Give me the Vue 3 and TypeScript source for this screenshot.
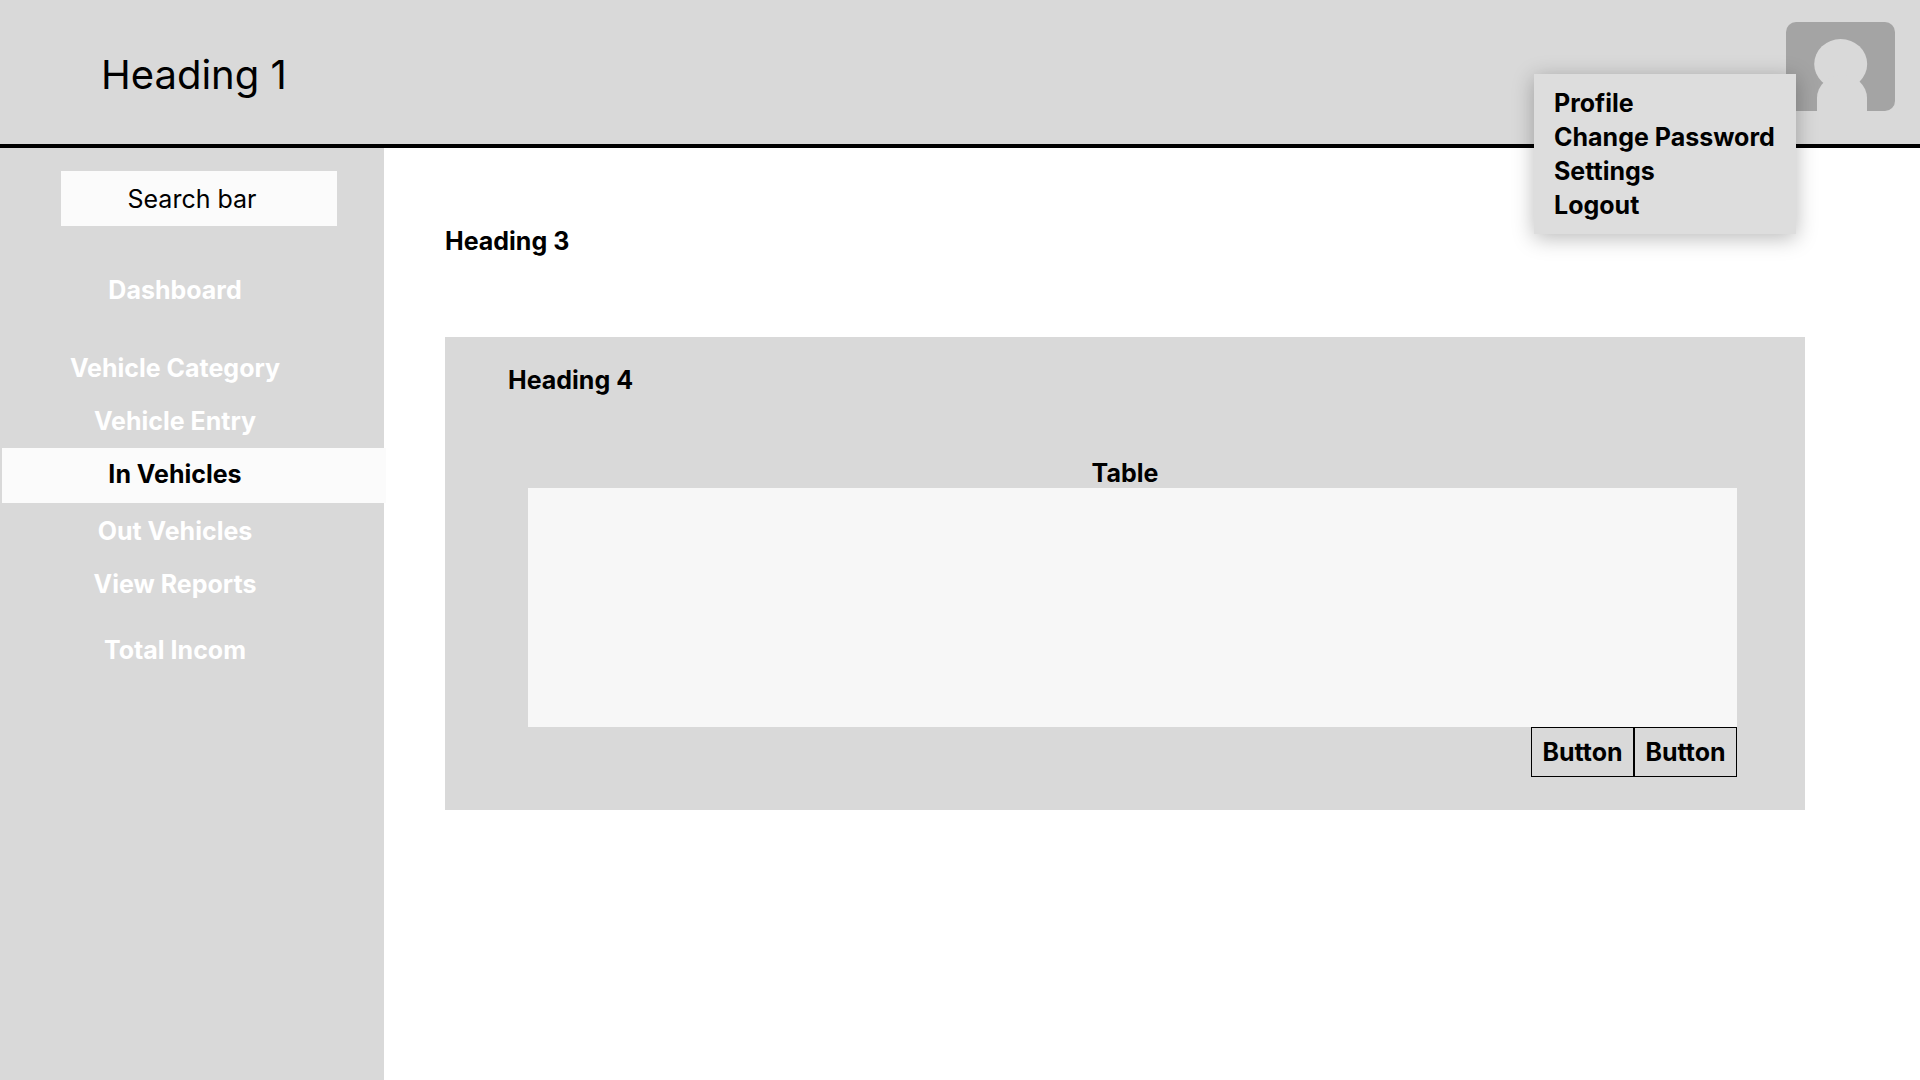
<script setup lang="ts">
import { ref } from 'vue'

interface NavItem {
  label: string
  active?: boolean
}

const search = ref('')

const navGroups: NavItem[][] = [
  [{ label: 'Dashboard' }],
  [
    { label: 'Vehicle Category' },
    { label: 'Vehicle Entry' },
    { label: 'In Vehicles', active: true },
    { label: 'Out Vehicles' },
    { label: 'View Reports' },
  ],
  [{ label: 'Total Incom' }],
]

const accountLinks: string[] = ['Profile', 'Change Password', 'Settings', 'Logout']
</script>

<template>
  <div class="page">
    <header class="topbar">
      <h1>Heading 1</h1>
      <div class="account">
        <svg class="avatar" viewBox="0 0 109 89" role="img" aria-label="User avatar">
          <rect width="109" height="89" rx="10" fill="#a4a4a4" />
          <ellipse cx="54.7" cy="42" rx="26.5" ry="25" fill="#d9d9d9" />
          <path d="M31 89V76A25 23 0 0 1 81 76V89Z" fill="#d9d9d9" />
        </svg>
        <nav class="menu" aria-label="Account">
          <a v-for="link in accountLinks" :key="link" href="#">{{ link }}</a>
        </nav>
      </div>
    </header>

    <div class="body">
      <aside class="sidebar">
        <input v-model="search" class="search" type="text" placeholder="Search bar" aria-label="Search bar" />
        <nav class="nav" aria-label="Main">
          <ul v-for="(group, i) in navGroups" :key="i">
            <li v-for="item in group" :key="item.label">
              <a href="#" :class="{ active: item.active }">{{ item.label }}</a>
            </li>
          </ul>
        </nav>
      </aside>

      <main class="content">
        <h3>Heading 3</h3>
        <section class="panel">
          <h4>Heading 4</h4>
          <h5>Table</h5>
          <div class="table-area"></div>
          <div class="actions">
            <button type="button">Button</button>
            <button type="button">Button</button>
          </div>
        </section>
      </main>
    </div>
  </div>
</template>

<style>
body {
  margin: 0;
}
</style>

<style scoped>
.page {
  display: flex;
  flex-direction: column;
  min-height: 100vh;
  background: #fff;
  color: #000;
  font-family: Inter, sans-serif;
  font-size: 25px;
  line-height: 30px;
}

.page * {
  box-sizing: border-box;
}

h1,
h3,
h4,
h5 {
  margin: 0;
  font-size: 25px;
  font-weight: 700;
}

a {
  color: inherit;
  text-decoration: none;
}

.topbar {
  display: flex;
  justify-content: space-between;
  align-items: flex-start;
  height: 148px;
  padding: 22px 25px 0 101px;
  border-bottom: 4px solid #000;
  background: #d9d9d9;
}

h1 {
  padding-top: 29px;
  font-size: 40px;
  font-weight: 400;
  line-height: 48px;
}

.account {
  position: relative;
}

.avatar {
  display: block;
  width: 109px;
  height: 89px;
}

.menu {
  position: absolute;
  top: 52px;
  right: 99px;
  display: flex;
  flex-direction: column;
  width: 262px;
  padding: 12px 0 12px 20px;
  background: #ddd;
  box-shadow: 0 4px 20px rgba(0, 0, 0, 0.28);
  font-weight: 700;
  line-height: 34px;
  white-space: nowrap;
}

.body {
  display: flex;
  flex: 1;
}

.sidebar {
  flex: none;
  width: 20%;
  padding-top: 23px;
  background: #d9d9d9;
}

.search {
  display: block;
  width: calc(100% - 108px);
  height: 55px;
  margin: 0 47px 38px 61px;
  padding: 0 14px 0 0;
  border: 0;
  border-radius: 0;
  background: #fbfbfb;
  color: #000;
  font: inherit;
  text-align: center;
}

.search::placeholder {
  color: #000;
  opacity: 1;
}

.nav {
  margin: 0 -2px 0 2px;
}

ul {
  margin: 0;
  padding: 0;
  list-style: none;
}

ul + ul {
  margin-top: 25px;
}

ul:last-child {
  margin-top: 13px;
}

li a {
  display: block;
  padding-right: 38px;
  color: #fff;
  font-weight: 700;
  line-height: 53px;
  text-align: center;
}

li a.active {
  height: 55px;
  margin-bottom: 2px;
  background: #fbfbfb;
  color: #000;
}

.content {
  flex: 1;
  padding: 78px 115px 0 61px;
}

.panel {
  margin-top: 81px;
  padding: 28px 68px 33px 83px;
  background: #d9d9d9;
}

h4 {
  margin-left: -20px;
}

h5 {
  margin-top: 63px;
  padding-right: 15px;
  text-align: center;
}

.table-area {
  height: 239px;
  background: #f7f7f7;
}

.actions {
  display: flex;
  justify-content: flex-end;
}

button {
  width: 103px;
  height: 50px;
  padding: 0;
  border: 1px solid #000;
  background: transparent;
  color: #000;
  font: inherit;
  font-weight: 700;
}
</style>
